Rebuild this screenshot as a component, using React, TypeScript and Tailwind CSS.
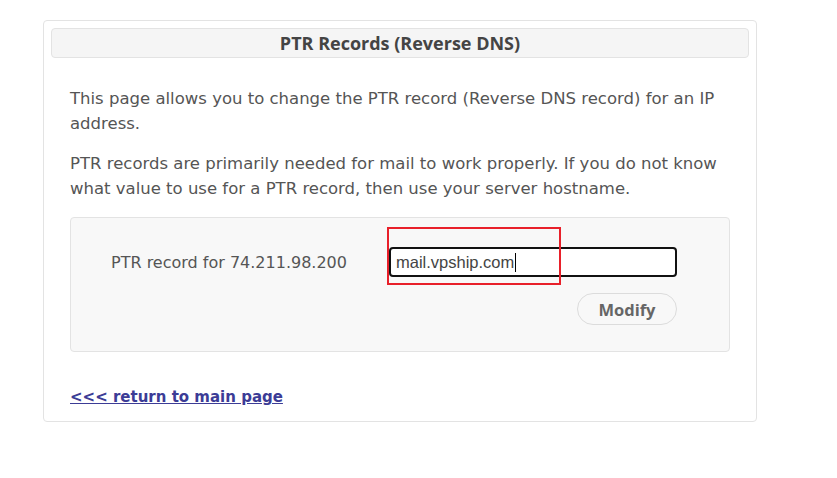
export default function App() {
  return (
    <div className="min-h-[478px] w-[837px] bg-white pl-[43px] pt-[20px] font-['DejaVu_Sans',Verdana,sans-serif] text-[#555]">
      <div className="h-[402px] w-[714px] rounded-[4px] border border-[#e3e3e3] p-[7px]">
        <div className="flex h-[30px] items-center justify-center rounded-[4px] border border-[#e3e3e3] bg-[#f5f5f5]">
          <h1 className="font-['Open_Sans',sans-serif] text-[18px] font-bold text-[#444]">PTR Records (Reverse DNS)</h1>
        </div>

        <div className="pl-[19px] pr-[20px] pt-[28px] text-[16.5px] leading-[25px]">
          <p>This page allows you to change the PTR record (Reverse DNS record) for an IP address.</p>
          <p className="mt-[15px]">
            PTR records are primarily needed for mail to work properly. If you do not know what value to use for a PTR
            record, then use your server hostname.
          </p>

          <div className="mt-[16px] flex h-[135px] w-[660px] rounded-[4px] border border-[#e3e3e3] bg-[#f8f8f8] pl-[40px] pt-[29px]">
            <div className="w-[278px] pt-[3px] text-[16px]">PTR record for 74.211.98.200</div>
            <div className="flex w-[288px] flex-col items-end">
              <div className="relative w-full">
                <div className="flex h-[30px] w-full items-center rounded-[4px] border-2 border-[#111] bg-white pl-[5px] font-['Liberation_Sans',Arial,sans-serif] text-[16.5px] text-[#444]">
                  mail.vpship.com
                  <span className="ml-[1px] h-[19px] w-[1px] bg-black" />
                </div>
                <div className="absolute left-[-2px] top-[-20px] h-[58px] w-[174px] border-2 border-[#e8202a]" />
              </div>
              <button
                type="button"
                className="mt-[16px] h-[32px] w-[100px] rounded-full border border-[#dcdcdc] bg-[#f8f8f8] font-['Open_Sans',sans-serif] text-[16.5px] font-bold text-[#666]"
              >
                Modify
              </button>
            </div>
          </div>

          <a href="#" className="mt-[33px] inline-block text-[15px] font-bold text-[#3c3c96] underline">
            &lt;&lt;&lt; return to main page
          </a>
        </div>
      </div>
    </div>
  );
}
